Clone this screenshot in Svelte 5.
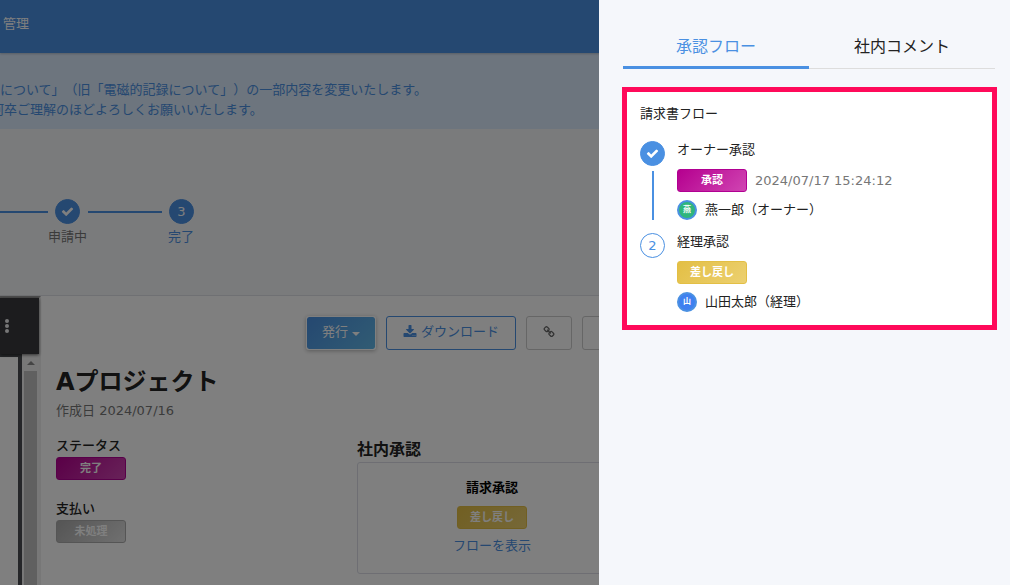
<script>
    const steps = [
        { label: '申請中', done: true },
        { label: '完了', number: 3, active: true },
    ];

    const flow = [
        {
            title: 'オーナー承認',
            done: true,
            badge: '承認',
            tone: 'purple',
            date: '2024/07/17 15:24:12',
            initial: '燕',
            avatar: 'green',
            user: '燕一郎（オーナー）',
        },
        {
            title: '経理承認',
            number: 2,
            badge: '差し戻し',
            tone: 'yellow',
            initial: '山',
            avatar: 'blue',
            user: '山田太郎（経理）',
        },
    ];

    let tab = $state('flow');
</script>

{#snippet check()}
    <svg class="check" viewBox="0 0 1792 1792" aria-hidden="true">
        <path d="M1671 566q0 40-28 68l-724 724-136 136q-28 28-68 28t-68-28l-136-136-362-362q-28-28-28-68t28-68l136-136q28-28 68-28t68 28l294 295 656-657q28-28 68-28t68 28l136 136q28 28 28 68z" />
    </svg>
{/snippet}

<div class="page">
    <header class="topbar">
        <a href="#manage">管理</a>
    </header>

    <div class="notice">
        <p>について」（旧「電磁的記録について」）の一部内容を変更いたします。</p>
        <p class="cut">何卒ご理解のほどよろしくお願いいたします。</p>
    </div>

    <ol class="steps">
        {#each steps as step}
            <li class="step" class:active={step.active}>
                <span class="circle filled">
                    {#if step.done}{@render check()}{:else}{step.number}{/if}
                </span>
                <span class="step-label">{step.label}</span>
            </li>
        {/each}
    </ol>

    <div class="content">
        <aside class="viewer">
            <div class="viewer-bar">
                <button class="dots" aria-label="メニュー">
                    <svg viewBox="0 0 4 14" aria-hidden="true">
                        <circle cx="2" cy="2" r="2" />
                        <circle cx="2" cy="7" r="2" />
                        <circle cx="2" cy="12" r="2" />
                    </svg>
                </button>
            </div>
            <div class="viewer-body">
                <div class="sheet"></div>
                <div class="scrollbar">
                    <svg class="arrow" viewBox="0 0 8 4" aria-hidden="true">
                        <path d="M0 4L4 0l4 4z" />
                    </svg>
                    <div class="thumb"></div>
                </div>
            </div>
        </aside>

        <main class="detail">
            <div class="toolbar">
                <button class="btn primary">発行<span class="caret"></span></button>
                <button class="btn outline">
                    <svg viewBox="0 0 1792 1792" aria-hidden="true">
                        <path d="M1344 1344q0-26-19-45t-45-19-45 19-19 45 19 45 45 19 45-19 19-45zm256 0q0-26-19-45t-45-19-45 19-19 45 19 45 45 19 45-19 19-45zm128-224v320q0 40-28 68t-68 28h-1472q-40 0-68-28t-28-68v-320q0-40 28-68t68-28h465l135 136q58 56 136 56t136-56l136-136h464q40 0 68 28t28 68zm-325-569q17 41-14 70l-448 448q-18 19-45 19t-45-19l-448-448q-31-29-14-70 17-39 59-39h256v-448q0-26 19-45t45-19h256q26 0 45 19t19 45v448h256q42 0 59 39z" />
                    </svg>
                    ダウンロード
                </button>
                <button class="btn plain" aria-label="リンク">
                    <svg viewBox="0 0 1792 1792" aria-hidden="true">
                        <path d="M1520 1216q0-40-28-68l-208-208q-28-28-68-28-42 0-72 32 3 3 19 18.5t21.5 21.5 15 19 13 25.5 3.5 27.5q0 40-28 68t-68 28q-15 0-27.5-3.5t-25.5-13-19-15-21.5-21.5-18.5-19q-33 31-33 73 0 40 28 68l206 207q27 27 68 27 40 0 68-26l147-146q28-28 28-67zm-703-705q0-40-28-68l-206-207q-28-28-68-28-39 0-68 27l-147 146q-28 28-28 67 0 40 28 68l208 208q27 27 68 27 42 0 72-31-3-3-19-18.5t-21.5-21.5-15-19-13-25.5-3.5-27.5q0-40 28-68t68-28q15 0 27.5 3.5t25.5 13 19 15 21.5 21.5 18.5 19q33-31 33-73zm895 705q0 120-85 203l-147 146q-83 83-203 83-121 0-204-85l-206-207q-83-83-83-203 0-123 88-209l-88-88q-86 88-208 88-120 0-204-84l-208-208q-84-84-84-204t85-203l147-146q83-83 203-83 121 0 204 85l206 207q83 83 83 203 0 123-88 209l88 88q86-88 208-88 120 0 204 84l208 208q84 84 84 204z" />
                    </svg>
                </button>
                <button class="btn plain" aria-label="その他"></button>
            </div>

            <h1>Aプロジェクト</h1>
            <p class="created">作成日 2024/07/16</p>

            <div class="columns">
                <dl class="status">
                    <dt>ステータス</dt>
                    <dd><span class="badge purple">完了</span></dd>
                    <dt>支払い</dt>
                    <dd><span class="badge gray">未処理</span></dd>
                </dl>
                <section class="approval">
                    <h2>社内承認</h2>
                    <div class="card">
                        <h3>請求承認</h3>
                        <span class="badge yellow">差し戻し</span>
                        <a href="#flow">フローを表示</a>
                    </div>
                </section>
            </div>
        </main>
    </div>
</div>

<div class="overlay"></div>

<aside class="drawer">
    <div class="tabs" role="tablist">
        <button role="tab" class:selected={tab === 'flow'} aria-selected={tab === 'flow'} onclick={() => (tab = 'flow')}>
            承認フロー
        </button>
        <button role="tab" class:selected={tab === 'comment'} aria-selected={tab === 'comment'} onclick={() => (tab = 'comment')}>
            社内コメント
        </button>
    </div>

    {#if tab === 'flow'}
        <section class="flow">
            <h2>請求書フロー</h2>
            <ol>
                {#each flow as item}
                    <li>
                        <div class="rail">
                            <span class="circle" class:filled={item.done}>
                                {#if item.done}{@render check()}{:else}{item.number}{/if}
                            </span>
                        </div>
                        <div class="info">
                            <p>{item.title}</p>
                            <div class="row">
                                <span class="badge {item.tone}">{item.badge}</span>
                                {#if item.date}<time>{item.date}</time>{/if}
                            </div>
                            <div class="row">
                                <span class="avatar {item.avatar}">{item.initial}</span>
                                <span>{item.user}</span>
                            </div>
                        </div>
                    </li>
                {/each}
            </ol>
        </section>
    {/if}
</aside>

<style>
    :global(body) {
        font-family: 'DejaVu Sans', 'Noto Sans CJK JP', sans-serif;
        font-size: 13px;
        line-height: 20px;
        text-spacing-trim: space-all;
        color: #222;
    }

    h1, h2, h3, p, ol, dl, dd {
        margin: 0;
        padding: 0;
    }

    ol {
        list-style: none;
    }

    a {
        color: #4a90e2;
        text-decoration: none;
    }

    button {
        font: inherit;
        cursor: pointer;
    }

    svg {
        display: block;
        fill: currentColor;
    }

    .page {
        height: 100vh;
        display: flex;
        flex-direction: column;
        overflow: hidden;
        background: #f5f6f9;
    }

    .topbar {
        flex: none;
        height: 53px;
        box-sizing: border-box;
        padding: 14px 3px;
        background: #4a90e2;
        box-shadow: 0 1px 2px rgba(0, 0, 0, 0.2);
        z-index: 1;
    }

    .topbar a {
        color: #fff;
    }

    .notice {
        flex: none;
        padding: 27px 0 9px;
        background: #dbeafc;
        color: #4a90e2;
        white-space: nowrap;
    }

    .notice .cut {
        margin-left: -9px;
    }

    .steps {
        flex: none;
        display: flex;
        padding: 70px 0 48px;
    }

    .step {
        display: flex;
        flex-wrap: wrap;
        justify-content: flex-end;
        width: 114px;
        row-gap: 3px;
        color: #777;
    }

    .step:first-child {
        width: 87px;
    }

    .step::before {
        content: '';
        flex: 1;
        height: 2px;
        margin: 12px 7px 0 0;
        background: #4a90e2;
    }

    .step .circle {
        margin-right: 7px;
    }

    .step:not(:first-child)::before {
        margin-left: 1px;
    }

    .step-label {
        width: 100%;
        box-sizing: border-box;
        text-align: right;
    }

    .step.active .step-label {
        padding-right: 7px;
        color: #4a90e2;
    }

    .circle {
        display: flex;
        align-items: center;
        justify-content: center;
        box-sizing: border-box;
        width: 25px;
        height: 25px;
        border: 1px solid #4a90e2;
        border-radius: 50%;
        color: #4a90e2;
    }

    .circle.filled {
        background: #4a90e2;
        color: #fff;
    }

    .check {
        width: 13px;
        height: 13px;
    }

    .content {
        flex: 1;
        min-height: 0;
        display: flex;
        border-top: 1px solid #dfe1e6;
        background: #fff;
    }

    .viewer {
        flex: none;
        width: 39px;
        display: flex;
        flex-direction: column;
        border-top: 2px solid #999;
        border-right: 2px solid #eee;
    }

    .viewer-bar {
        flex: none;
        height: 56px;
        box-sizing: border-box;
        padding: 19px 0 0 5px;
        background: #38383d;
        box-shadow: 0 1px 3px rgba(0, 0, 0, 0.6);
        z-index: 1;
    }

    .dots {
        display: block;
        padding: 2px 0;
        border: 0;
        background: none;
        color: #eee;
    }

    .dots svg {
        width: 4px;
        height: 14px;
    }

    .viewer-body {
        flex: 1;
        display: flex;
        background: #4a4d52;
    }

    .sheet {
        width: 18px;
        margin: 3px 4px 0 0;
        background: #fff;
    }

    .scrollbar {
        flex: 1;
        display: flex;
        flex-direction: column;
        align-items: center;
        padding: 7px 2px 0;
        background: #f1f1f1;
    }

    .arrow {
        flex: none;
        width: 8px;
        height: 4px;
        color: #888;
    }

    .thumb {
        flex: 1;
        width: 100%;
        margin-top: 6px;
        background: #c1c1c1;
    }

    .detail {
        flex: 1;
        min-width: 0;
        padding: 20px 15px;
    }

    .toolbar {
        display: flex;
        gap: 10px;
        padding-left: 250px;
    }

    .btn {
        display: flex;
        align-items: center;
        justify-content: center;
        gap: 4px;
        box-sizing: border-box;
        height: 34px;
        padding: 0 16px 3px;
        border: 1px solid #ccc;
        border-radius: 3px;
        background: #fff;
        color: #666;
        white-space: nowrap;
    }

    .btn svg {
        width: 14px;
        height: 14px;
    }

    .btn.primary {
        padding: 0 15px 3px;
        border-color: #fff;
        background: linear-gradient(135deg, #4a90e2, #62b8e8);
        background-clip: padding-box;
        box-shadow: 0 1px 4px rgba(0, 0, 0, 0.3);
        color: #fff;
    }

    .btn.outline {
        border-color: #4a90e2;
        color: #4a90e2;
    }

    .btn.plain {
        width: 46px;
    }

    .caret {
        border: 4px solid transparent;
        border-top-color: currentColor;
        border-bottom: 0;
        margin-top: 4px;
    }

    h1 {
        margin-top: 14px;
        font-size: 24px;
        line-height: 36px;
    }

    .created {
        margin-top: 1px;
        color: #777;
    }

    .columns {
        display: grid;
        grid-template-columns: 270px 270px;
        column-gap: 31px;
        margin-top: 15px;
    }

    dt {
        font-weight: 500;
    }

    dd {
        margin: 1px 0 19px;
    }

    .badge {
        display: flex;
        align-items: center;
        justify-content: center;
        box-sizing: border-box;
        width: 70px;
        height: 23px;
        padding-top: 1px;
        border: 1px solid;
        border-radius: 3px;
        font-size: 11px;
        font-weight: bold;
    }

    .badge.purple {
        border-color: #b10092;
        background: linear-gradient(135deg, #b5008f, #d045b2);
        color: #fff;
    }

    .badge.yellow {
        border-color: #e3bf45;
        background: linear-gradient(135deg, #e3bf45, #ecd070);
        color: #fff;
    }

    .badge.gray {
        border-color: #aaa;
        background: linear-gradient(135deg, #aaa, #e0e0e0);
        color: #fff;
    }

    .approval h2 {
        padding-top: 2px;
        font-size: 16px;
        line-height: 24px;
    }

    .card {
        display: flex;
        flex-direction: column;
        align-items: center;
        padding: 15px 0 17px;
        border: 1px solid #dcdde6;
        border-radius: 3px;
    }

    .card h3 {
        font-size: 13px;
        color: #000;
    }

    .card .badge {
        margin: 8px 0 7px;
    }

    .overlay {
        position: fixed;
        inset: 0;
        z-index: 10;
        background: rgba(0, 0, 0, 0.5);
    }

    .drawer {
        position: fixed;
        inset: 0 0 0 auto;
        z-index: 20;
        width: 411px;
        box-sizing: border-box;
        padding: 22px 13px 0 23px;
        background: #f5f7fb;
    }

    .tabs {
        display: flex;
        margin: 0 2px 18px 1px;
    }

    .tabs button {
        flex: 1;
        height: 47px;
        padding: 4px 0 0;
        border: 0;
        border-bottom: 1px solid #ddd;
        background: none;
        color: #222;
        font-size: 16px;
        line-height: 24px;
    }

    .tabs button.selected {
        padding-top: 6px;
        border-bottom: 3px solid #4a90e2;
        color: #4a90e2;
    }

    .flow {
        padding: 12px 13px 13px;
        border: 5px solid #ff0a5a;
        background: #fff;
    }

    .flow h2 {
        margin-bottom: 16px;
        font-size: 13px;
        font-weight: normal;
    }

    .flow li {
        display: flex;
        gap: 12px;
    }

    .flow li:not(:last-child) {
        padding-bottom: 12px;
    }

    .rail {
        display: flex;
        flex-direction: column;
        align-items: center;
        padding-top: 1px;
    }

    .flow li:not(:last-child) .rail::after {
        content: '';
        flex: 1;
        width: 2px;
        margin-top: 5px;
        background: #4a90e2;
    }

    .row {
        display: flex;
        align-items: center;
        gap: 8px;
        margin-top: 8px;
    }

    .info p + .row {
        margin-top: 9px;
    }

    .row time {
        color: #777;
    }

    .avatar {
        display: flex;
        align-items: center;
        justify-content: center;
        box-sizing: border-box;
        width: 20px;
        height: 20px;
        border: 2px solid #4a90e2;
        border-radius: 50%;
        color: #fff;
        font-size: 8px;
        font-weight: bold;
        line-height: 12px;
    }

    .avatar.green {
        background: #2fb67c;
    }

    .avatar.blue {
        background: #3f80f0;
    }
</style>
